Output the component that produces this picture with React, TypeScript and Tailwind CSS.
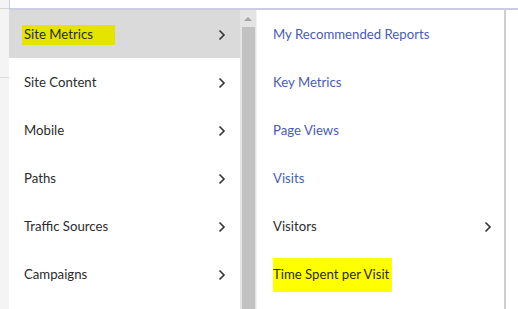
import React from 'react';

const leftItems = ['Site Metrics', 'Site Content', 'Mobile', 'Paths', 'Traffic Sources', 'Campaigns'];

const rightItems = [
  { label: 'My Recommended Reports', link: true },
  { label: 'Key Metrics', link: true },
  { label: 'Page Views', link: true },
  { label: 'Visits', link: true },
  { label: 'Visitors', link: false, sub: true },
  { label: 'Time Spent per Visit', link: false, mark: true },
];

function Chevron() {
  return (
    <svg width="8" height="12" viewBox="0 0 8 12" className="shrink-0">
      <path d="M1.5 1.5 L6 6 L1.5 10.5" fill="none" stroke="#333" strokeWidth="1.6" />
    </svg>
  );
}

export default function App() {
  return (
    <div className="flex h-[309px] w-[518px] overflow-hidden bg-white text-[13.2px] font-['Lato',sans-serif]">
      {/* page background strip */}
      <div className="flex w-[9px] shrink-0 flex-col bg-[#f4f4f4]">
        <div className="h-[9px] border-b border-[#d4d4d4]" />
        <div className="h-[69px] border-b border-[#dcdcdc]" />
      </div>

      <div className="flex flex-1 flex-col">
        <div className="h-[10px] shrink-0 border-b-2 border-l border-[#c8cde3] bg-white" />

        <div className="flex flex-1">
          {/* left menu */}
          <div className="w-[231px] shrink-0">
            {leftItems.map((item, i) => (
              <div
                key={item}
                className={`flex h-[48px] items-center justify-between pt-[2px] pl-[15px] pr-[14px] text-[#2c2c2c] ${i === 0 ? 'bg-[#dadada]' : 'bg-white'}`}
              >
                <span className={i === 0 ? '-ml-[2px] bg-[#e4e400] pl-[2px] pr-[22px]' : ''}>{item}</span>
                <Chevron />
              </div>
            ))}
          </div>

          {/* scrollbar */}
          <div className="flex w-[17px] shrink-0 flex-col items-center border-r border-[#f2f2f2] bg-[#e4e4e4]">
            <div className="flex h-[17px] items-center justify-center">
              <div className="h-0 w-0 border-x-[4px] border-b-[4px] border-x-transparent border-b-[#a3a3a3]" />
            </div>
            <div className="w-[13px] flex-1 bg-[#c2c2c2]" />
          </div>

          {/* right panel */}
          <div className="w-[249px] shrink-0 border-r-2 border-[#cfcfcf] bg-white">
            {rightItems.map((item) => (
              <div
                key={item.label}
                className={`flex h-[48px] items-center justify-between pt-[2px] pl-[16px] pr-[12px] ${item.link ? 'text-[#4a5db3]' : 'text-[#2c2c2c]'}`}
              >
                <span className={item.mark ? 'bg-[#ffff00] py-[7px] pr-[3px]' : ''}>{item.label}</span>
                {item.sub && <Chevron />}
              </div>
            ))}
          </div>
          <div className="flex-1 bg-white" />
        </div>
      </div>
    </div>
  );
}
